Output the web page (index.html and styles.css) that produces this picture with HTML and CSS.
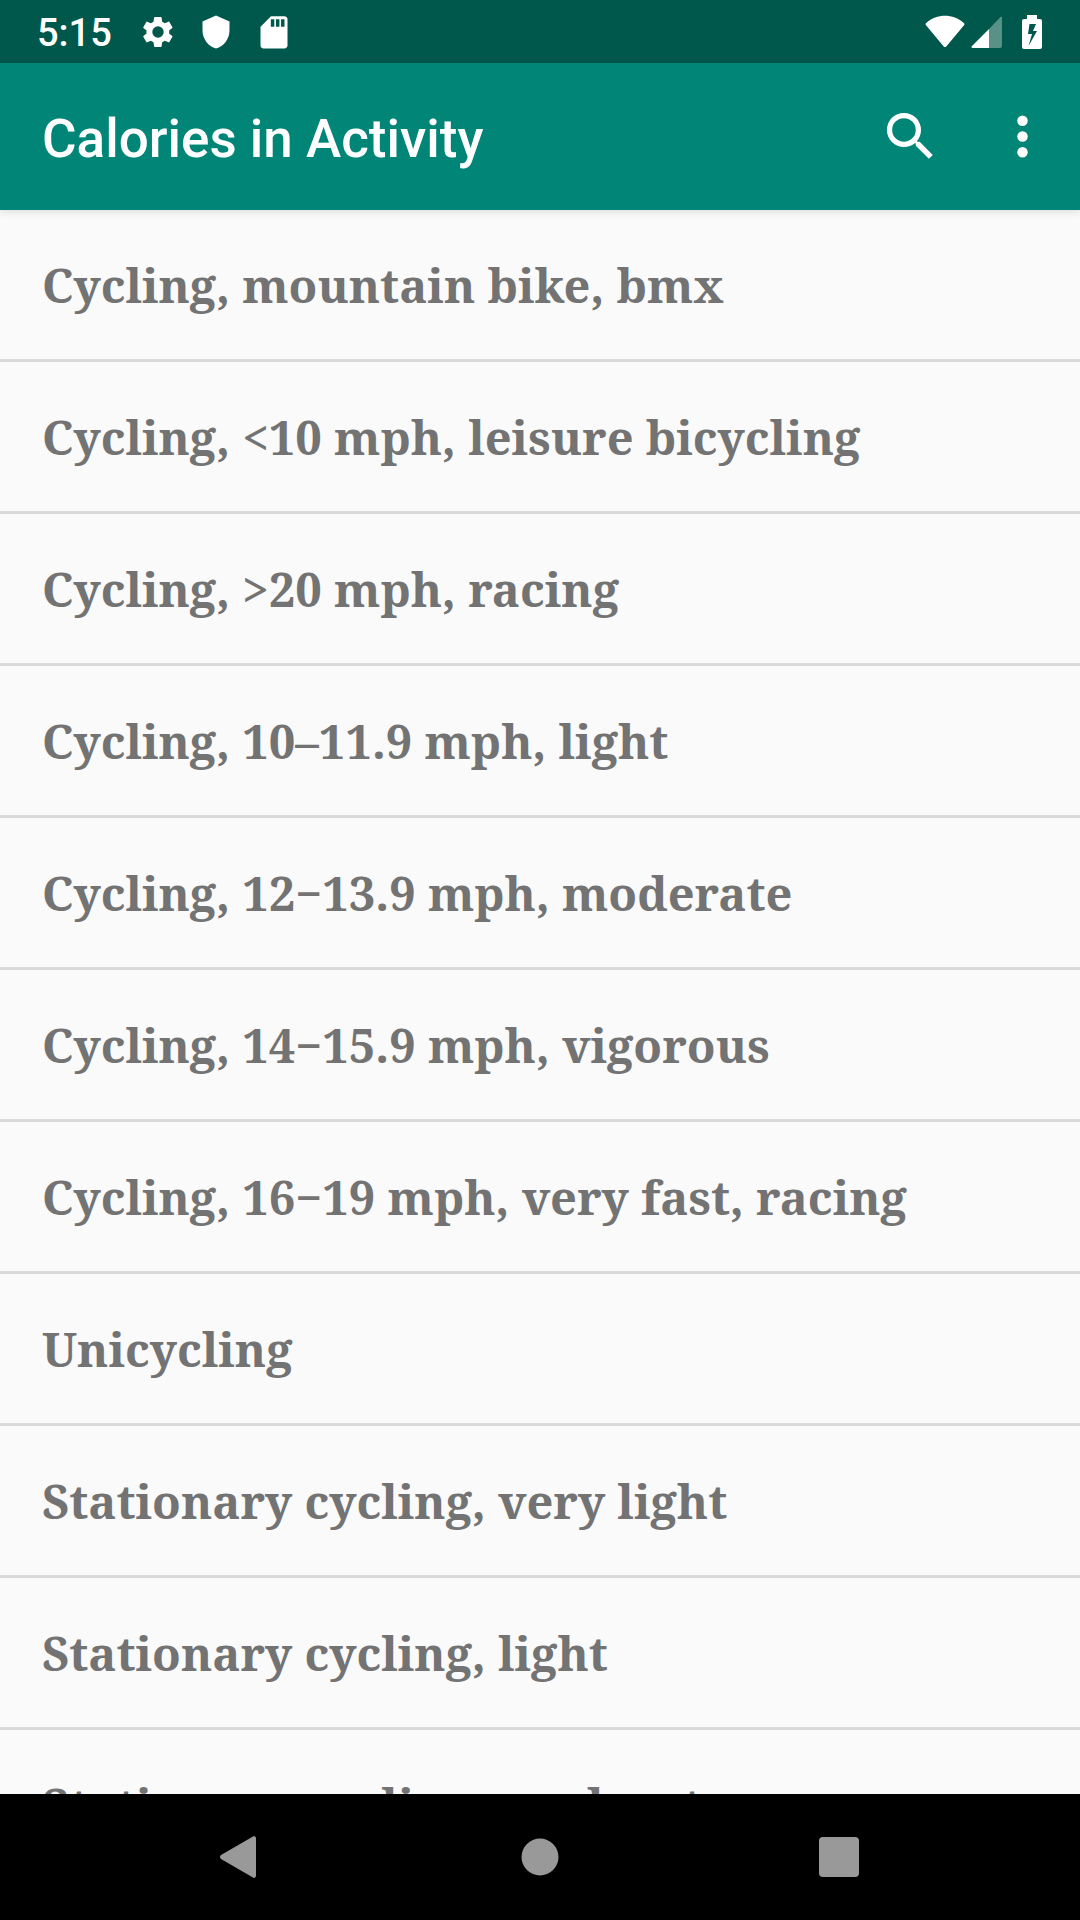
FILE: index.html
```html
<!DOCTYPE html>
<html lang="en">
<head>
    <meta charset="UTF-8">
    <meta name="viewport" content="width=device-width, initial-scale=1.0">
    <title>Calories in Activity</title>
    <link rel="stylesheet" href="styles.css">
</head>
<body>
    <!-- Status bar -->
    <div class="status-bar">
        <time class="clock">5:15</time>
        <div class="status-left">
            <svg class="status-icon" viewBox="0 0 24 24"><path d="M19.4 13c0-.3.1-.6.1-1s0-.7-.1-1l2.1-1.600c.2-.2.2-.4.1-.6l-2-3.500c-.1-.2-.4-.3-.6-.2l-2.500 1c-.5-.4-1.100-.7-1.700-1l-.4-2.600c0-.3-.2-.5-.5-.5h-4c-.3 0-.5.2-.5.500l-.4 2.600c-.6.3-1.200.6-1.700 1l-2.500-1c-.2-.1-.5 0-.6.200l-2 3.500c-.1.200-.1.500.1.600l2.100 1.600c0 .3-.1.600-.1 1s0 .7.100 1l-2.100 1.600c-.2.200-.2.400-.1.600l2 3.500c.1.200.4.300.6.200l2.500-1c.5.400 1.100.7 1.700 1l.4 2.600c0 .3.200.5.500.5h4c.3 0 .5-.2.500-.5l.4-2.600c.6-.3 1.200-.6 1.700-1l2.500 1c.2.100.5 0 .6-.2l2-3.500c.1-.2.100-.5-.1-.6zM12 15.800a3.800 3.800 0 1 1 0-7.600 3.800 3.800 0 0 1 0 7.600z"/></svg>
            <svg class="status-icon" viewBox="0 0 24 24"><path d="M12 1 3 5v6c0 5.550 3.840 10.740 9 12 5.160-1.260 9-6.450 9-12V5z"/></svg>
            <svg class="status-icon" viewBox="0 0 24 24"><path d="M19 1.500H10L3 8.500v12.500c0 1.100.9 2 2 2h14c1.100 0 2-.9 2-2v-17.500c0-1.100-.9-2-2-2zM12.200 8.500H9.900v-5h2.300zm3.400 0h-2.300v-5h2.300zm3.400 0h-2.300v-5H19z"/></svg>
        </div>
        <div class="status-right">
            <svg class="wifi-icon" viewBox="0 0 40 34"><path d="M1.200 8C12-1.600 28-1.600 38.800 8q1.200 1 .2 2.200L21.500 31.200q-1.500 1.800-3 0L1 10.200Q0 9 1.200 8z"/></svg>
            <svg class="signal-icon" viewBox="0 0 32 34"><path opacity=".35" d="M18 14 29.500 2q1.500-1.200 1.500.5V31q0 2-2 2H18z"/><path d="M18 14v19H1.500q-2-.5-.5-2z"/></svg>
            <svg class="battery-icon" viewBox="0 0 20 34"><path fill-rule="evenodd" d="M5 0h10v4h3q2 0 2 2v26q0 2-2 2H2q-2 0-2-2V6q0-2 2-2h3zM7.500 9 6 19h4L6.500 31 15 16h-4l3-7z"/></svg>
        </div>
    </div>

    <!-- App bar -->
    <header class="app-bar">
        <h1 class="title">Calories in Activity</h1>
        <button type="button" class="icon-button" aria-label="Search">
            <svg class="action-icon" viewBox="0 0 24 24"><path d="M15.500 14h-.79l-.28-.27A6.470 6.470 0 0 0 16 9.500 6.500 6.500 0 1 0 9.500 16c1.610 0 3.090-.59 4.230-1.570l.27.28v.79l5 4.990L20.490 19zm-6 0a4.500 4.500 0 1 1 0-9 4.500 4.500 0 0 1 0 9z"/></svg>
        </button>
        <button type="button" class="icon-button" aria-label="More options">
            <svg class="action-icon" viewBox="0 0 24 24"><circle cx="12" cy="6" r="2"/><circle cx="12" cy="12" r="2"/><circle cx="12" cy="18" r="2"/></svg>
        </button>
    </header>

    <!-- Activity list -->
    <main class="content">
        <ul class="activity-list">
            <li class="activity">Cycling, mountain bike, bmx</li>
            <li class="activity">Cycling, &lt;10 mph, leisure bicycling</li>
            <li class="activity">Cycling, &gt;20 mph, racing</li>
            <li class="activity">Cycling, 10–11.9 mph, light</li>
            <li class="activity">Cycling, 12−13.9 mph, moderate</li>
            <li class="activity">Cycling, 14−15.9 mph, vigorous</li>
            <li class="activity">Cycling, 16−19 mph, very fast, racing</li>
            <li class="activity">Unicycling</li>
            <li class="activity">Stationary cycling, very light</li>
            <li class="activity">Stationary cycling, light</li>
            <li class="activity">Stationary cycling, moderate</li>
        </ul>
    </main>

    <!-- Navigation bar -->
    <nav class="nav-bar">
        <button type="button" class="nav-button" aria-label="Back">
            <svg class="nav-icon" viewBox="0 0 48 48"><path d="M39 5v38q-1 3-3 1.500L4 26q-2-2 0-4L36 3.500Q38 2 39 5z"/></svg>
        </button>
        <button type="button" class="nav-button" aria-label="Home">
            <svg class="nav-icon" viewBox="0 0 48 48"><circle cx="24" cy="24" r="18.500"/></svg>
        </button>
        <button type="button" class="nav-button" aria-label="Recent apps">
            <svg class="nav-icon" viewBox="0 0 48 48"><rect x="4" y="4" width="40" height="40" rx="4"/></svg>
        </button>
    </nav>
</body>
</html>
```
FILE: styles.css
```css
* {
    box-sizing: border-box;
}
body {
    margin: 0;
    height: 100vh;
    display: flex;
    flex-direction: column;
    background: #fafafa;
    font-family: Roboto, sans-serif;
    overflow: hidden;
}
svg {
    display: block;
    fill: currentColor;
}
button {
    padding: 0;
    border: none;
    background: transparent;
    color: inherit;
    cursor: pointer;
}
.status-bar {
    display: flex;
    flex-shrink: 0;
    align-items: center;
    height: 63px;
    padding: 0 38px 0 37px;
    background: #00574b;
    color: #fff;
}
.clock {
    padding-top: 2px;
    font-size: 38px;
    font-weight: 500;
    line-height: 44px;
}
.status-left {
    display: flex;
    gap: 22px;
    margin-left: 28px;
}
.status-icon {
    width: 36px;
    height: 36px;
}
.status-right {
    display: flex;
    align-items: center;
    margin-left: auto;
}
.wifi-icon {
    width: 40px;
    height: 34px;
}
.signal-icon {
    width: 32px;
    height: 34px;
    margin-left: 6px;
}
.battery-icon {
    width: 20px;
    height: 34px;
    margin-left: 19px;
}
.app-bar {
    display: flex;
    flex-shrink: 0;
    align-items: center;
    height: 147px;
    padding: 0 2px 0 42px;
    background: #008577;
    color: #fff;
    box-shadow: 0 2px 8px rgba(0, 0, 0, 0.12);
    z-index: 1;
}
.title {
    flex: 1;
    margin: 0;
    padding-top: 4px;
    font-size: 53px;
    font-weight: 500;
    line-height: 62px;
}
.icon-button {
    display: flex;
    align-items: center;
    justify-content: center;
    width: 112px;
    height: 126px;
}
.action-icon {
    width: 63px;
    height: 63px;
}
.content {
    flex: 1;
    min-height: 0;
    overflow: hidden;
}
.activity-list {
    margin: 0;
    padding: 0;
    list-style: none;
}
.activity {
    padding: 43px 42px 41px;
    border-bottom: 3px solid #d9d9d9;
    color: #737373;
    font-family: "Noto Serif", "DejaVu Serif Condensed", "DejaVu Serif", serif;
    font-size: 47px;
    font-weight: bold;
    line-height: 65px;
    white-space: nowrap;
}
.nav-bar {
    display: grid;
    flex-shrink: 0;
    grid-template-columns: repeat(3, 1fr);
    height: 126px;
    padding: 0 92px;
    background: #000;
    color: #999;
}
.nav-button {
    display: flex;
    align-items: center;
    justify-content: center;
}
.nav-icon {
    width: 48px;
    height: 48px;
}
```
